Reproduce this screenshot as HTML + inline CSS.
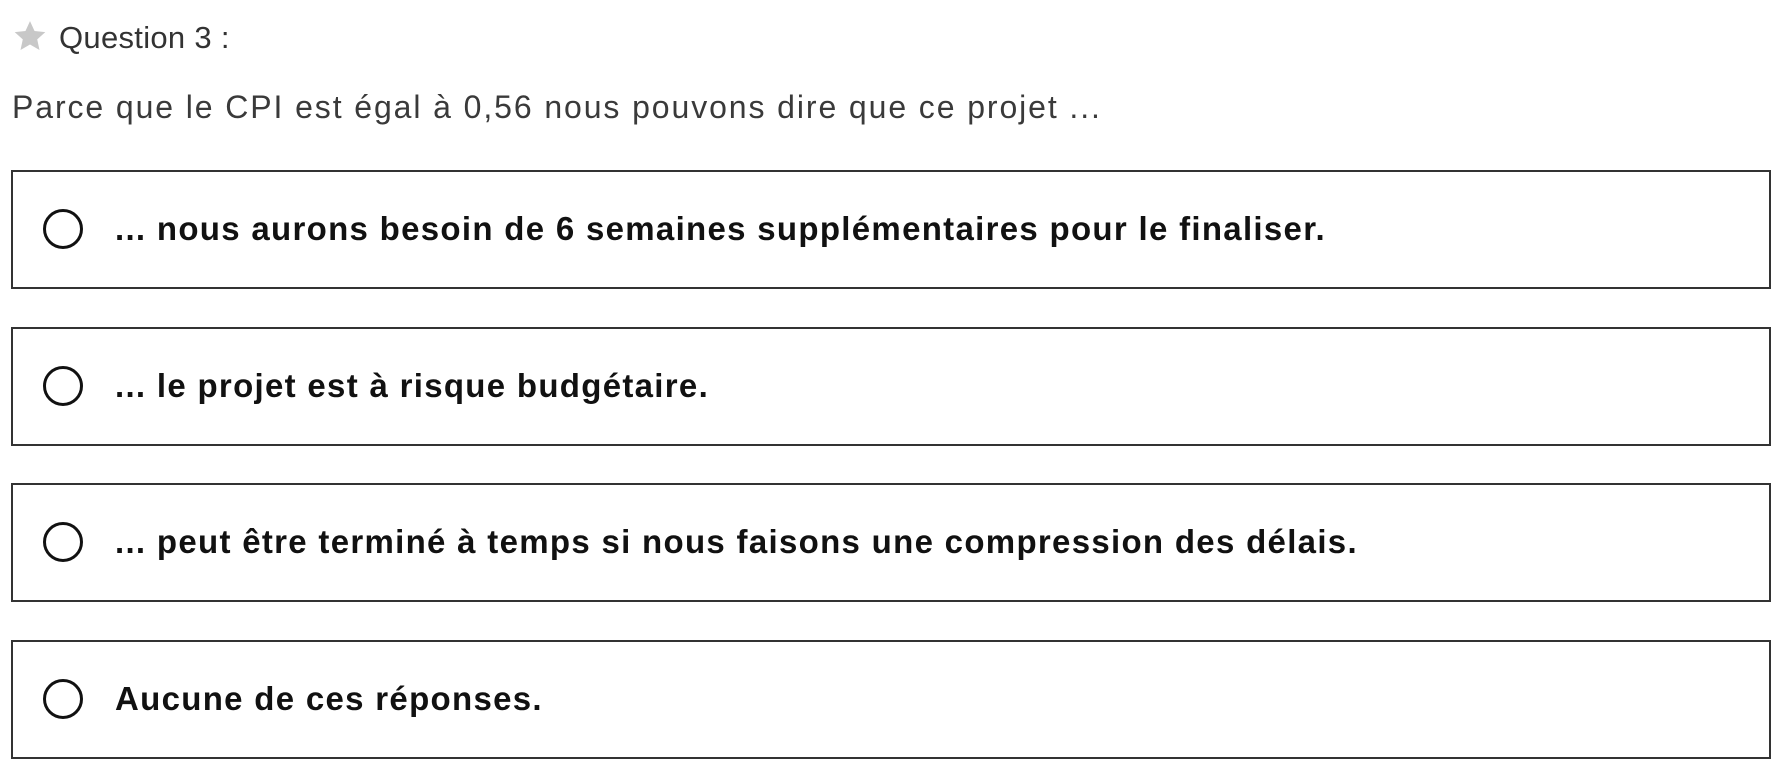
<!DOCTYPE html>
<html><head><meta charset="utf-8"><style>
body{margin:0;width:1792px;height:770px;background:#fff;font-family:"Liberation Sans",sans-serif;position:relative;overflow:hidden}
.q{position:absolute;left:59px;top:20px;font-size:31px;color:#333;letter-spacing:0.3px}
.star{position:absolute;left:13px;top:19px}
.p{position:absolute;left:12px;top:89px;font-size:32px;color:#3a3a3a;letter-spacing:1.9px;white-space:nowrap}
.box{position:absolute;left:11px;width:1756px;height:115px;border:2px solid #333;box-sizing:content-box}
.box .c{position:absolute;left:30px;top:37px;width:34px;height:34px;border:3px solid #111;border-radius:50%}
.box .t{position:absolute;left:102px;top:39px;font-size:33px;font-weight:bold;color:#111;line-height:36px;letter-spacing:1.3px;white-space:nowrap}
</style></head><body>
<svg class="star" width="34" height="34" viewBox="0 0 24 24"><path d="M12 1.5l3.2 7 7.6.8-5.7 5.1 1.6 7.5L12 18l-6.7 3.9 1.6-7.5L1.2 9.3l7.6-.8z" fill="#c8c8c8"/></svg>
<div class="q">Question 3 :</div>
<div class="p">Parce que le CPI est égal à 0,56 nous pouvons dire que ce projet ...</div>
<div class="box" style="top:170px"><div class="c"></div><div class="t">... nous aurons besoin de 6 semaines supplémentaires pour le finaliser.</div></div>
<div class="box" style="top:327px"><div class="c"></div><div class="t">... le projet est à risque budgétaire.</div></div>
<div class="box" style="top:483px"><div class="c"></div><div class="t">... peut être terminé à temps si nous faisons une compression des délais.</div></div>
<div class="box" style="top:640px"><div class="c"></div><div class="t">Aucune de ces réponses.</div></div>
</body></html>
